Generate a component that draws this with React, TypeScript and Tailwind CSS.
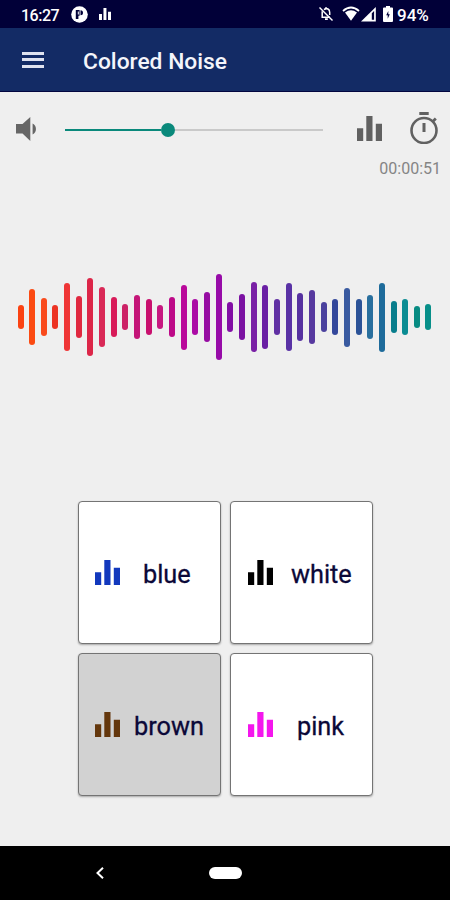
import React from "react";

type Bar = [top: number, bottom: number, color: string];

// Vertical extents of each wave bar, in thirds of a pixel
const WAVE: Bar[] = [
  [134, 208, "#fb4212"], [86, 256, "#fb4a12"], [114, 228, "#f94a1c"], [134, 208, "#ec3323"],
  [69, 273, "#ef3536"], [109, 234, "#e0283f"], [53, 289, "#dc2648"], [81, 262, "#d92957"],
  [111, 231, "#d81b59"], [133, 209, "#cc2266"], [104, 238, "#c41578"], [117, 225, "#c9106e"],
  [136, 207, "#c71880"], [110, 232, "#bd0a88"], [73, 268, "#b9089a"], [118, 224, "#ab0ba5"],
  [96, 246, "#960ca2"], [43, 299, "#970ba8"], [125, 216, "#820fa5"], [101, 240, "#7b12a2"],
  [65, 277, "#7920a5"], [76, 266, "#6a1fa4"], [118, 224, "#6030a3"], [68, 273, "#5932a5"],
  [99, 243, "#5631a0"], [90, 252, "#57399f"], [126, 216, "#4a419e"], [116, 226, "#33479b"],
  [83, 260, "#395aa0"], [117, 225, "#2b5297"], [106, 236, "#296f9e"], [68, 275, "#1e6b9b"],
  [123, 218, "#087d8c"], [116, 225, "#0b8c93"], [138, 204, "#078b82"], [132, 209, "#078f89"],
];

function Bars({ className }: { className: string }) {
  return (
    <svg viewBox="0 0 25 25" fill="currentColor" className={className}>
      <path d="M0 12.3h6.2V25H0zM9.3 0h6.2v25H9.300zM18.800 7.700H25V25h-6.200z" />
    </svg>
  );
}

function StatusBar() {
  return (
    <div className="flex h-7 items-center bg-[#010038] pl-[21px] text-[16px] leading-none font-medium text-white">
      <span className="w-[38px] pt-[3px] tracking-[-0.5px]">16:27</span>
      <svg viewBox="0 0 17 17" className="ml-[12px] h-[17px] w-[17px]">
        <circle cx="8.5" cy="8.5" r="8.3" fill="#fff" />
        <path d="M4.800 4v9h2.600V9.800h1.200V4z" fill="#010038" />
        <path d="M7.300 5.500v3" stroke="#fff" strokeWidth="1" />
        <path d="M9.500 4.200a2.500 2.500 0 0 1 0 5z" fill="#010038" />
      </svg>
      <Bars className="ml-[11px] h-[12px] w-[12px]" />
      <svg viewBox="0 0 16 16" className="ml-[207px] h-4 w-4" fill="none" stroke="#fff">
        <path d="M4.2 5.2v6H12M6 3.7c3-2.4 5.7-.3 5.7 2.700v2.500" strokeWidth="1.500" />
        <path d="M7 13.200h2.800M8 1.200v1.500" strokeWidth="1.700" />
        <path d="M1.500 1.500l13 13" strokeWidth="1.400" />
      </svg>
      <svg viewBox="0 0 18 16" className="ml-[8px] h-4 w-[18px]" fill="none">
        <path d="M1 5q8-7 16 0" stroke="#fff" strokeWidth="1.800" />
        <path d="M3 6.500q6-4.500 12 0l-6 8.200z" fill="#fff" />
      </svg>
      <svg viewBox="0 0 15 15" className="ml-[1px] h-[15px] w-[15px]">
        <path d="M0 14.500L14.800 0v14.500z" fill="#fff" />
        <path d="M10.800 6.200l2.300-2.200v8.800h-2.300z" fill="#010038" />
      </svg>
      <svg viewBox="0 0 10 16" className="ml-[7px] h-4 w-[10px]">
        <path d="M3 0h4v1.600h2q1 0 1 1V15q0 1-1 1H1q-1 0-1-1V2.600q0-1 1-1h2z" fill="#fff" />
        <path d="M5.300 5L3.200 9.300h1.500v3.500L6.800 8.300H5.300z" fill="#010038" />
      </svg>
      <span className="ml-[4px] pt-[3px] text-[17px] tracking-[0px]">94%</span>
    </div>
  );
}

function Controls() {
  return (
    <div className="flex h-[64px] items-start">
      <svg viewBox="0 0 22 24" className="mt-[25px] ml-4 h-6 w-[22px] text-[#666]" fill="currentColor">
        <path d="M0 7h6.500L14.300 0v24L6.500 16.500H0zM16.600 6.500a6.200 6.200 0 0 1 0 11z" />
      </svg>
      <div className="mt-[31px] ml-[27px] flex h-[14px] w-[258px] items-center">
        <div className="h-[2px] w-[96px] bg-[#0a897b]" />
        <div className="h-[14px] w-[14px] rounded-full bg-[#0a897b]" />
        <div className="h-[2px] flex-1 bg-[#c9c9c9]" />
      </div>
      <Bars className="mt-[24px] ml-[34px] h-[25px] w-[25px] text-[#616161]" />
      <svg viewBox="0 0 28 33" className="mt-[19px] ml-[28px] h-[33px] w-7" fill="none" stroke="#616161">
        <circle cx="14" cy="19.500" r="12.500" strokeWidth="2.600" />
        <path d="M9.300 2.500h9.400M14 12v9" strokeWidth="3" />
        <path d="M22.600 10.800l3.200-3.200" strokeWidth="2.800" />
      </svg>
    </div>
  );
}

function Tile({ label, color, labelClass, active = false }: { label: string; color: string; labelClass: string; active?: boolean }) {
  return (
    <button
      className={`flex h-[143px] w-[143px] items-center rounded-[4px] border border-[#747474] pl-[16px] shadow-[0_1px_2px_rgba(0,0,0,0.3)] ${active ? "bg-[#d2d2d2]" : "bg-white"}`}
    >
      <Bars className={`h-[25px] w-[25px] shrink-0 ${color}`} />
      <span className={`pt-[4px] text-[25.300px] leading-[28px] text-[#0b0838] [-webkit-text-stroke:0.3px_currentColor] ${labelClass}`}>{label}</span>
    </button>
  );
}

export default function App() {
  return (
    <div className="flex h-[900px] w-[450px] flex-col overflow-hidden bg-[#efefef] font-['Roboto',sans-serif]">
      <StatusBar />
      <header className="flex h-16 items-center border-b border-[#02063f] bg-[#132b65] pl-[22px]">
        <div className="flex w-[22px] flex-col gap-[3.500px]">
          <div className="h-[3px] bg-[#dfe2ef]" />
          <div className="h-[3px] bg-[#dfe2ef]" />
          <div className="h-[3px] bg-[#dfe2ef]" />
        </div>
        <h1 className="ml-[39px] pt-[5px] text-[22.800px] leading-7 font-medium text-[#f4f5fb]">Colored Noise</h1>
      </header>
      <Controls />
      <div className="h-6 pt-px pr-[9px] text-right text-[16px] leading-6 text-[#858585]">00:00:51</div>
      <div className="mt-[94px] flex h-[86px] items-center justify-between pr-[18.500px] pl-[17.500px]">
        {WAVE.map(([top, bottom, color], i) => (
          <div
            key={i}
            className="w-[6px] rounded-full"
            style={{ height: (bottom - top) / 3, backgroundColor: color }}
          />
        ))}
      </div>
      <div className="mt-[141px] ml-[78px] grid w-[295px] grid-cols-2 gap-[9px]">
        <Tile label="blue" color="text-[#1238bd]" labelClass="ml-[23px]" />
        <Tile label="white" color="text-black ml-px" labelClass="ml-[18px]" />
        <Tile label="brown" color="text-[#64370c]" labelClass="ml-[14px]" active />
        <Tile label="pink" color="text-[#f416ed] ml-px" labelClass="ml-[24px]" />
      </div>
      <nav className="mt-auto flex h-[54px] items-center bg-black pl-[96px]">
        <svg viewBox="0 0 8 12" className="h-3 w-2" fill="none" stroke="#fff" strokeWidth="2">
          <path d="M7 .8L1.500 6 7 11.200" />
        </svg>
        <div className="ml-[105px] h-[12px] w-[33px] rounded-full bg-white" />
      </nav>
    </div>
  );
}
